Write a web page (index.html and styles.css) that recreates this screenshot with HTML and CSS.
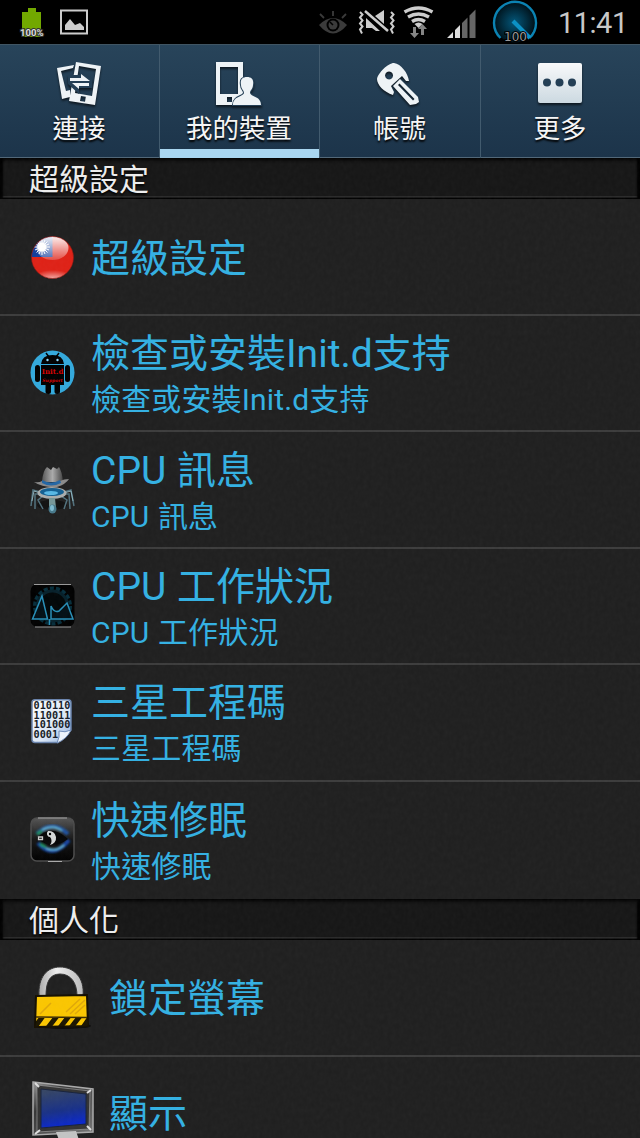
FILE: index.html
```html
<!DOCTYPE html>
<html lang="zh-Hant">
<head>
  <meta charset="UTF-8">
  <meta name="viewport" content="width=device-width, initial-scale=1.0">
  <title>設定</title>
  <link rel="stylesheet" href="styles.css">
</head>
<body>

  <!-- Status bar -->
  <div class="status-bar">
    <svg class="status-icons" width="552" height="44" viewBox="0 0 552 44">
      <defs>
        <radialGradient id="dial"><stop offset="0" stop-color="#04577a"/><stop offset="1" stop-color="#00141d"/></radialGradient>
      </defs>
      <path d="M28 8h8v4h5v25H22V12h6z" fill="#72a800"/>
      <text x="31.800" y="35.500" class="battery-text">100%</text>
      <path d="M61 10.500h26v23H61z" fill="none" stroke="#ccc" stroke-width="2"/>
      <path d="M65 30v-5l5-6 5 6 5-2 4 4v3z" fill="#ccc"/>
      <!-- eye -->
      <path d="M319 25q14-14 28 0q-14 17-28 0z" fill="#3b3b3b"/>
      <circle cx="333" cy="25" r="6.500"/>
      <circle cx="333" cy="25" r="4.500" fill="#3b3b3b"/>
      <path d="M333 25l-3-3" stroke="#000" stroke-width="1.500"/>
      <path d="M333 11v5M320 14l4 4M346 14l-4 4" stroke="#3b3b3b" stroke-width="1.800"/>
      <!-- vibrate / mute -->
      <path d="M366 18l14 13h-4l-4-3h-6zM375 16l9-6v14z" fill="#ccc"/>
      <path d="M364 12l24 20" stroke="#000" stroke-width="5"/>
      <path d="M365 11l23 20" stroke="#ccc" stroke-width="2.500"/>
      <g fill="none" stroke="#ccc" stroke-width="2">
        <path d="M360 12l2.500 2.500-2.500 3 2.500 3-2.500 3 2.500 3-2.500 3 2 4"/>
        <path d="M391 12l2.500 2.500-2.500 3 2.500 3-2.500 3 2.500 3-2.500 3 2 4"/>
      </g>
      <!-- wifi -->
      <g fill="none" stroke="#ccc" stroke-width="3.400">
        <path d="M404.500 12q14-8 28 0M408 17q10.500-6 21 0M412 21.500q6.500-4 13 0"/>
      </g>
      <path d="M414.500 24q4-3 8 0l-4 4z" fill="#ccc"/>
      <path d="M413 27h3v6h3l-4.500 5-4.500-5h3zM421 35v-6h-3l4.500-5 4.500 5h-3v6z" fill="#858585"/>
      <!-- signal -->
      <path d="M447 38l6-6v6zM455 38v-8l5-5v13z" fill="#ddd"/>
      <path d="M462 38V23l5.500-5.500V38zM469.500 38V15.500l6-6V38z" fill="#666"/>
      <!-- cpu dial -->
      <circle cx="514.500" cy="22.500" r="20" fill="url(#dial)"/>
      <path d="M500.500 38a21 21 0 1 1 29 0" fill="none" stroke="#0b83b3" stroke-width="2.400"/>
      <path d="M513 21l17 17" stroke="#0c91c5" stroke-width="4"/>
      <text x="515.500" y="41" class="dial-text">100</text>
    </svg>
    <span class="clock">11:41</span>
  </div>

  <!-- Tabs -->
  <div class="tabs">
    <div class="tab">
      <svg class="tab-icon" width="46" height="46" viewBox="0 0 46 46">
        <path d="M1 6l17-3-1 3-12 3 5 20 4-1 0 7-8 2z"/>
        <path fill-rule="evenodd" d="M20 0l25 4-6 39-26-4zM23 4l-4 27 17 3 4-27zM25 34l-1 5 5 .700.800-5z"/>
        <path class="cut" d="M12 13h12v-4l12 8v9H23v6L12 22z"/>
        <path d="M14 16h11v-4l9 7H14zM33 21H16l7 6v-3h10z"/>
      </svg>
      <span>連接</span>
    </div>
    <div class="tab active">
      <svg class="tab-icon" width="46" height="46" viewBox="0 0 46 46">
        <path fill-rule="evenodd" d="M0 0h27v43H0zM4 5v27h18V5zM11 35v5h5v-5z"/>
        <path class="edge" d="M31 15c5 0 7 3 6 8 0 4-3 5-3 8 1 4 11 3 11 12H17c0-9 10-8 11-12 0-3-3-4-3-8-1-5 1-8 6-8z"/>
      </svg>
      <span>我的裝置</span>
    </div>
    <div class="tab">
      <svg class="tab-icon" width="46" height="46" viewBox="0 0 46 46">
        <path fill-rule="evenodd" d="M17 1c7 1 14 10 15 18l-3 0-4-5-11 10 3 6-1 3C7 30 0 23 0 17 1 11 11 1 17 1zM12 9.500a4 4 0 1 0 .1 0z"/>
        <path fill-rule="evenodd" d="M23 17l18 18 1 5-3 2-6 1-17-19zM22.500 21.500l-1.500 1.500L36 38.500l1.500-1.500z"/>
      </svg>
      <span>帳號</span>
    </div>
    <div class="tab">
      <svg class="tab-icon" width="46" height="46" viewBox="0 0 46 46">
        <defs><linearGradient id="silver" x2="0" y2="1"><stop offset="0" stop-color="#f8f9fa"/><stop offset="1" stop-color="#ccd9e1"/></linearGradient></defs>
        <rect x="1" y="1" width="44" height="40" rx="2" fill="url(#silver)"/>
        <g class="cut"><circle cx="10" cy="20.500" r="4"/><circle cx="22.500" cy="20.500" r="4"/><circle cx="35" cy="20.500" r="4"/></g>
      </svg>
      <span>更多</span>
    </div>
  </div>

  <!-- Settings list -->
  <div class="list">
    <svg class="grain" width="640" height="980">
      <filter id="noise"><feTurbulence type="fractalNoise" baseFrequency="0.25 0.18" numOctaves="2"/><feColorMatrix type="saturate" values="0"/></filter>
      <rect width="640" height="980" filter="url(#noise)"/>
    </svg>

    <h2 class="section-title">超級設定</h2>

    <div class="row">
      <svg class="icon" width="46" height="46" viewBox="0 0 46 46">
        <defs>
          <clipPath id="ball"><circle cx="22.500" cy="22.500" r="21"/></clipPath>
          <linearGradient id="gloss" x2="0" y2="1"><stop offset="0" stop-color="#fff" stop-opacity=".95"/><stop offset="1" stop-color="#fff" stop-opacity=".2"/></linearGradient>
          <radialGradient id="glow" cx=".5" cy="1" r=".5"><stop offset="0" stop-color="#fff" stop-opacity=".8"/><stop offset="1" stop-color="#fff" stop-opacity="0"/></radialGradient>
        </defs>
        <g clip-path="url(#ball)">
          <path d="M0 0h46v46H0z" fill="#df2116"/>
          <path d="M0 0h22.500v22H0z" fill="#123d9c"/>
          <ellipse cx="22.500" cy="13" rx="16" ry="12" fill="url(#gloss)"/>
          <path d="M0 24h46v22H0z" fill="url(#glow)"/>
          <path d="M12 4v16M4 12h16M6.500 6.500l11 11M17.500 6.500l-11 11M9 5l6 14M15 5L9 19M5 9l14 6M5 15l14-6" stroke="#fff" stroke-width="1"/>
          <circle cx="12" cy="12" r="4.500" fill="#fff"/>
        </g>
        <circle cx="22.500" cy="22.500" r="21" fill="none" stroke="#8d1710" stroke-opacity=".6"/>
      </svg>
      <div class="text"><div class="title">超級設定</div></div>
    </div>

    <div class="row">
      <svg class="icon" width="46" height="46" viewBox="0 0 46 46">
        <circle cx="22.500" cy="22.500" r="22" fill="#33a9dc"/>
        <path d="M11 14q1-9 11.500-9T34 14zM11 15h23v20H11z"/>
        <path d="M16 3l3 4M29 3l-3 4" stroke="#000" stroke-width="1.500"/>
        <rect x="5" y="15" width="5" height="17" rx="2.500"/>
        <rect x="35" y="15" width="5" height="17" rx="2.500"/>
        <rect x="15.500" y="32" width="5.500" height="12" rx="2.500"/>
        <rect x="24.500" y="32" width="5.500" height="12" rx="2.500"/>
        <circle cx="17.500" cy="10" r="1.200" fill="#8fdcff"/>
        <circle cx="27.500" cy="10" r="1.200" fill="#8fdcff"/>
        <text x="22.500" y="23.500" class="initd">Init.d</text>
        <text x="22.500" y="32" class="initd small">Support</text>
      </svg>
      <div class="text">
        <div class="title">檢查或安裝Init.d支持</div>
        <div class="summary">檢查或安裝Init.d支持</div>
      </div>
    </div>

    <div class="row">
      <svg class="icon" width="46" height="50" viewBox="0 0 46 50">
        <defs><linearGradient id="hat" x2="1"><stop offset="0" stop-color="#555"/><stop offset=".5" stop-color="#aaa"/><stop offset="1" stop-color="#444"/></linearGradient></defs>
        <ellipse cx="22" cy="40" rx="15" ry="5" fill="#111"/>
        <g fill="none" stroke="#51717d" stroke-width="1.500">
          <path d="M10 27L3 25 1 41M11 29l-6 0 0 15M13 31l-5 4 5 9M34 27l7-2 3 16M33 29l6 0 1 15M31 31l6 4-3 9"/>
        </g>
        <path d="M10 28l-6-2-2 10M34 28l7-2 2 10" fill="none" stroke="#9bc1cb" stroke-width=".8"/>
        <ellipse cx="22" cy="28" rx="14.500" ry="6" fill="#a9adad"/>
        <ellipse cx="22" cy="27" rx="12" ry="4" fill="#125f92"/>
        <ellipse cx="21" cy="28" rx="7" ry="2" fill="#58b8e5"/>
        <path d="M19 33h6l1 10q-4 6-7 0z" fill="#769697"/>
        <ellipse cx="22.500" cy="44" rx="4" ry="4.500" fill="#47798b"/>
        <ellipse cx="22" cy="43" rx="2" ry="3" fill="#7ebbd0"/>
        <path d="M12 17q1-12 5-15l4 3 2-3 4 2 2-2q3 4 4 15z" fill="url(#hat)"/>
        <path d="M4 17q5 1 8-1 8 5 18 0 4-2 9-2-3 5-12 8-14 1-23-5z" fill="#8a8a8a"/>
        <path d="M12 15q9 5 18 0l1 3q-10 5-19 0z" fill="#2367a5"/>
      </svg>
      <div class="text">
        <div class="title">CPU 訊息</div>
        <div class="summary">CPU 訊息</div>
      </div>
    </div>

    <div class="row">
      <svg class="icon" width="46" height="46" viewBox="0 0 46 46">
        <rect x=".5" y="1" width="44" height="43" rx="7"/>
        <path d="M4 1.500h37M5 44h36" stroke="#999" stroke-width="1.200"/>
        <circle cx="22.500" cy="23" r="17.500" fill="none" stroke="#052d3b" stroke-width="4" stroke-dasharray="4 2.100"/>
        <circle cx="22.500" cy="23" r="15" fill="#010607" stroke="#06202a" stroke-width="3"/>
        <path d="M2.500 36L12 13l5.500 23zM21 36V23q3 7 8 5l8-8 6 16zM19.500 36v6" fill="#020f15" stroke="#278fb8" stroke-width="1.500"/>
      </svg>
      <div class="text">
        <div class="title">CPU 工作狀況</div>
        <div class="summary">CPU 工作狀況</div>
      </div>
    </div>

    <div class="row">
      <svg class="icon" width="46" height="46" viewBox="0 0 46 46">
        <defs><linearGradient id="paper" x2="1" y2="1"><stop offset="0" stop-color="#fff"/><stop offset=".6" stop-color="#dce8f7"/><stop offset="1" stop-color="#8caee0"/></linearGradient></defs>
        <path d="M5 .8h33q3 0 3 3V31L28 43.500H5q-3 0-3-3V3.800q0-3 3-3z" fill="url(#paper)" stroke="#6983ac" stroke-width="1.500"/>
        <g class="binary">
          <text x="3.500" y="10">010110</text>
          <text x="3.500" y="19.600">110011</text>
          <text x="3.500" y="29.200">101000</text>
          <text x="3.500" y="38.800">0001</text>
        </g>
        <path d="M27 44q3-6 2-12 6 2 12-1-4 9-14 13z" fill="#eef4fc" stroke="#708cb8"/>
      </svg>
      <div class="text">
        <div class="title">三星工程碼</div>
        <div class="summary">三星工程碼</div>
      </div>
    </div>

    <div class="row">
      <svg class="icon" width="46" height="46" viewBox="0 0 46 46">
        <defs>
          <linearGradient id="tile" x2="0" y2="1"><stop offset="0" stop-color="#555"/><stop offset=".5" stop-color="#151515"/><stop offset="1" stop-color="#000"/></linearGradient>
          <filter id="soft"><feGaussianBlur stdDeviation="1"/></filter>
        </defs>
        <rect x="1" y="1" width="43" height="43" rx="6" fill="url(#tile)" stroke="#4c4c4c" stroke-width="1.500"/>
        <path d="M8 1h29M18 44.500h14" stroke="#aaa"/>
        <g fill="none" filter="url(#soft)">
          <path d="M7 17Q22 2 38 17" stroke="#1c52a5" stroke-width="4"/>
          <path d="M8 26q15 17 31-3" stroke="#1647a6" stroke-width="4"/>
          <path d="M12 13q11-6 20 1M16 31q10 4 18-3" stroke="#65b6d4" stroke-width="2"/>
          <path d="M7 17l5-3M10 27l6 3" stroke="#22945b" stroke-width="3"/>
        </g>
        <path d="M7 21Q21 6 38 22 22 34 7 21z" fill="#050607"/>
        <circle cx="20" cy="21" r="7" fill="#080808"/>
        <path d="M18 14a7 7 0 0 1 2 14 6 6 0 0 0 0-8 3.500 3.500 0 0 1-2-6z" fill="#d5d8d8"/>
        <circle cx="20" cy="17" r="1.200"/>
        <path d="M8.500 20h4v2.500h-4z" fill="none" stroke="#ccc" stroke-width="1.300"/>
      </svg>
      <div class="text">
        <div class="title">快速修眠</div>
        <div class="summary">快速修眠</div>
      </div>
    </div>

    <h2 class="section-title">個人化</h2>

    <div class="row wide">
      <svg class="icon" width="64" height="66" viewBox="0 0 64 66">
        <defs>
          <linearGradient id="metal" x2="1"><stop offset="0" stop-color="#aaa"/><stop offset=".4" stop-color="#eee"/><stop offset="1" stop-color="#bbb"/></linearGradient>
          <clipPath id="stripes"><path d="M5 52h51l1 8H5z"/></clipPath>
        </defs>
        <ellipse cx="32" cy="60" rx="28" ry="3" fill="#0b0b0b"/>
        <path d="M8 30C7 11 16 1 29 1s25 10 23 29h-6C46 17 40 8 29 8S15 17 15 30z" fill="url(#metal)" stroke="#333"/>
        <path d="M5 30l51-1 1 31-53 1z" fill="#fbc600" stroke="#140e00" stroke-width="2"/>
        <path d="M35 46l14-13M39 48l15-14M44 48l10-9M9 48l11-11" stroke="#e0a808" stroke-width="1.500"/>
        <g clip-path="url(#stripes)" stroke="#1b1500" stroke-width="5"><path d="M4 61l8-11M16 63l10-13M28 63l10-13M39 63l10-13M51 63l9-13"/></g>
        <path d="M5 51l51 .500" stroke="#3b2a00" stroke-width="1.500"/>
      </svg>
      <div class="text"><div class="title">鎖定螢幕</div></div>
    </div>

    <div class="row wide">
      <svg class="icon" width="64" height="66" viewBox="0 0 64 66">
        <defs>
          <linearGradient id="screen" x1=".4" x2=".6" y2="1"><stop offset="0" stop-color="#354565"/><stop offset=".55" stop-color="#183088"/><stop offset="1" stop-color="#0826d8"/></linearGradient>
          <linearGradient id="frame" x2="1" y2="1"><stop offset="0" stop-color="#999"/><stop offset=".3" stop-color="#353535"/><stop offset="1" stop-color="#777"/></linearGradient>
        </defs>
        <path d="M2 1l60 7v43L2 54z" fill="url(#frame)" stroke="#aaa" stroke-width="1.500"/>
        <path d="M6 4l53 6-1 38-52 3z" fill="#333" stroke="#999" stroke-width=".7"/>
        <path d="M10 8l45 5v30l-45 4z" fill="url(#screen)" stroke="#17223c"/>
        <path d="M4 2l4 4M60 9l-4 3M60 49l-4-4M4 53l5-4" stroke="#ddd" stroke-width="2"/>
        <path d="M25 51l20-1 3 9H28z" fill="#c4c4c4"/>
      </svg>
      <div class="text"><div class="title">顯示</div></div>
    </div>
  </div>

</body>
</html>
```
FILE: styles.css
```css
body {
  margin: 0;
  width: 640px;
  height: 1138px;
  overflow: hidden;
  display: flex;
  flex-direction: column;
  background: #000;
  font-family: Roboto, "Noto Sans CJK TC", sans-serif;
}

svg {
  display: block;
  flex: none;
}

.status-bar {
  display: flex;
  height: 44px;
  flex: none;
}

.clock {
  width: 80px;
  padding-left: 6px;
  color: #c8c8c8;
  font-size: 29px;
  line-height: 46px;
  font-weight: 400;
  letter-spacing: -0.5px;
  white-space: nowrap;
}

.battery-text {
  fill: #ddd;
  stroke: #333;
  stroke-width: 2px;
  paint-order: stroke;
  font: bold 9.5px Roboto, sans-serif;
  text-anchor: middle;
}

.dial-text {
  fill: #999;
  stroke: #000;
  stroke-width: 2px;
  paint-order: stroke;
  font: 12px "DejaVu Sans", sans-serif;
  text-anchor: middle;
}

.tabs {
  display: grid;
  grid-template-columns: 160px 160px 161px 159px;
  height: 114px;
  flex: none;
  box-sizing: border-box;
  border-top: 1px solid #405563;
  border-bottom: 1px solid #526879;
  background: linear-gradient(#28445a, #1c344a);
}

.tab {
  display: flex;
  flex-direction: column;
  align-items: center;
  box-sizing: border-box;
  height: 113px;
  padding: 17px 1px 0 0;
  border-right: 1px solid #425b6e;
  color: #f5f5f5;
  font-size: 26.5px;
  line-height: 42px;
  text-shadow: 0 2px 2px #000;
}

.tab:last-child {
  border-right: none;
}

.tab.active {
  box-shadow: inset 0 -9px 0 #a9d6f0;
}

.tab-icon {
  fill: #eef3f6;
  filter: drop-shadow(0 2px 1px rgba(0, 0, 0, 0.6));
}

.tab-icon .cut {
  fill: #243f55;
}

.tab-icon .edge {
  stroke: #243f55;
  stroke-width: 2px;
  paint-order: stroke;
}

.list {
  position: relative;
  flex: 1;
  overflow: hidden;
  background: #1f1f1f;
}

.grain {
  position: absolute;
  top: 0;
  left: 0;
  opacity: 0.035;
  pointer-events: none;
}

.section-title {
  box-sizing: border-box;
  height: 41px;
  margin: 0;
  padding-left: 29px;
  border-bottom: 1px solid #000;
  background: #161616;
  box-shadow: inset 3px 0 2px #000, inset -3px 0 2px #000, inset 0 3px 3px #090909, inset 0 -2px 0 #303030;
  color: #eee;
  font-size: 30px;
  font-weight: 400;
  line-height: 43px;
  text-shadow: 0 2px 2px #000;
}

.row {
  display: flex;
  align-items: center;
  gap: 15px;
  box-sizing: border-box;
  height: 116.4px;
  padding-left: 30px;
  border-bottom: 2px solid #3c3c3c;
  color: #33b1e3;
}

.section-title + .row {
  height: 117px;
  padding-top: 3px;
}

.row:has(+ .section-title) {
  height: 117px;
  border-bottom: none;
}

.row.wide {
  gap: 14px;
  padding-left: 31px;
}

.text {
  padding-top: 1px;
}

.text:has(.summary) {
  padding-top: 8px;
}

.title {
  font-size: 39px;
  line-height: 46px;
  word-spacing: 1px;
}

.summary {
  font-size: 30px;
  line-height: 46px;
  letter-spacing: 0.15px;
  word-spacing: 1px;
}

/* Text inside the row icons */
.initd {
  fill: #d40000;
  font: bold 7px "DejaVu Serif", serif;
  text-anchor: middle;
}

.initd.small {
  font-size: 4.5px;
  font-style: italic;
}

.binary {
  fill: #151b26;
  font: bold 10.2px "DejaVu Sans Mono", monospace;
}
```
